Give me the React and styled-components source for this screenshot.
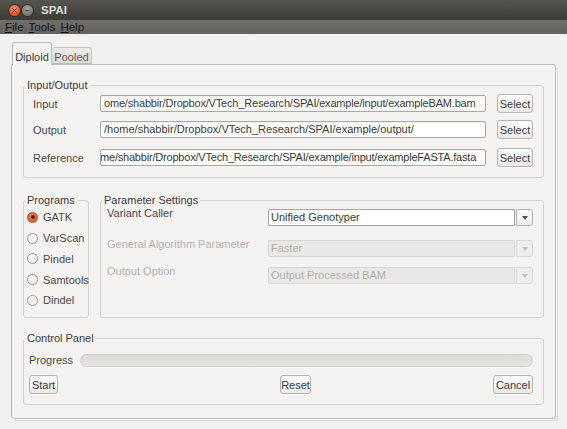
import React from 'react';
import styled, { createGlobalStyle } from 'styled-components';

const Global = createGlobalStyle`
  html, body { margin: 0; padding: 0; background: #f2f1f0; }
  body { font-family: "Liberation Sans", Arial, sans-serif; font-size: 11px; color: #3c3c3c; }
  * { box-sizing: border-box; }
`;

const Window = styled.div`
  width: 567px;
  height: 429px;
  display: flex;
  flex-direction: column;
  overflow: hidden;
  background: #f2f1f0;
`;

const TitleBar = styled.div`
  height: 20px;
  flex: none;
  display: flex;
  align-items: center;
  padding-left: 9px;
  background: linear-gradient(#55544f, #3c3b37);
`;

const WinButton = styled.span`
  width: 11px;
  height: 11px;
  border-radius: 50%;
  margin-right: 2px;
  display: flex;
  align-items: center;
  justify-content: center;
  background: ${p => (p.$close
    ? 'radial-gradient(circle at 50% 35%, #f89a68, #df4c17 70%)'
    : 'radial-gradient(circle at 50% 35%, #a9a8a3, #74736e 70%)')};
  box-shadow: 0 0 0 1px rgba(0, 0, 0, 0.35);
`;

const Title = styled.span`
  margin-left: 6px;
  font-weight: bold;
  font-size: 11.5px;
  color: #dfdbd2;
`;

const MenuBar = styled.div`
  height: 14px;
  flex: none;
  display: flex;
  align-items: center;
  gap: 5px;
  padding-left: 5px;
  background: linear-gradient(#6f6e69, #64635f);
`;

const MenuItem = styled.span`
  font-size: 11.5px;
  color: #161616;
  line-height: 14px;
  & u { text-decoration: underline; text-underline-offset: 1px; }
`;

const Body = styled.div`
  flex: 1;
  padding: 8px 0 0 11px;
`;

const TabStrip = styled.div`
  height: 23px;
  margin-bottom: -1px;
  padding-left: 1px;
  display: flex;
  align-items: flex-start;
  position: relative;
  z-index: 1;
`;

const Tab = styled.div`
  width: 40px;
  height: ${p => (p.$active ? '23px' : '17px')};
  margin-top: ${p => (p.$active ? '0' : '5px')};
  border: 1px solid ${p => (p.$active ? '#bdbbb6' : '#c6c4bf')};
  border-bottom: ${p => (p.$active ? 'none' : '1px solid #bdbbb6')};
  border-left: ${p => (p.$active ? '1px solid #bdbbb6' : 'none')};
  border-radius: 3px 3px 0 0;
  background: ${p => (p.$active ? '#f4f3f2' : 'linear-gradient(#ebeae8, #dedcd9)')};
  color: ${p => (p.$active ? '#3c3c3c' : '#5c5c5c')};
  padding-top: ${p => (p.$active ? '7px' : '2px')};
  line-height: 14px;
  text-align: center;
  font-size: 11px;
`;

const Pane = styled.div`
  width: 545px;
  border: 1px solid #bdbbb6;
  border-radius: 0 3px 3px 3px;
  background: #f4f3f2;
  padding: 13px 11px 13px 11px;
  display: flex;
  flex-direction: column;
  box-shadow: 1px 1px 0 #ffffff, 2px 2px 0 #d8d6d1;
`;

const Group = styled.fieldset`
  margin: 0;
  margin-top: ${p => p.$mt || 0}px;
  padding: 0;
  min-width: 0;
  border: 1px solid #d6d4cf;
  border-radius: 3px;
  width: ${p => (p.$w ? `${p.$w}px` : 'auto')};
  flex: ${p => (p.$w ? 'none' : '1')};
`;

const Legend = styled.legend`
  margin-left: 1px;
  padding: 0 2px;
  line-height: 14px;
  font-size: 11px;
  color: #3c3c3c;
`;

const GroupBody = styled.div`
  padding: ${p => p.$pad};
`;

const IORow = styled.div`
  display: grid;
  grid-template-columns: 56px 1fr 36px;
  column-gap: 11px;
  align-items: center;
  height: 19px;
  margin-top: ${p => p.$mt || 0}px;
`;

const Label = styled.span`
  color: ${p => (p.$disabled ? '#b4b2ad' : '#4a4a4a')};
  font-size: 11px;
  line-height: 14px;
  white-space: nowrap;
`;

const TextField = styled.div`
  height: 17px;
  border: 1px solid #aaa8a3;
  border-radius: 2px;
  background: #ffffff;
  padding: 0 3px;
  overflow: hidden;
  white-space: nowrap;
  line-height: 15px;
  font-size: 11px;
  color: #3a3a3a;
  box-shadow: inset 0 1px 1px rgba(0, 0, 0, 0.06);
`;

const FieldText = styled.span`
  display: inline-block;
  margin-left: ${p => p.$shift || 0}px;
  letter-spacing: ${p => p.$track || 0}px;
`;

const Button = styled.div`
  width: ${p => p.$w}px;
  height: 19px;
  border: 1px solid #b5b3ae;
  border-radius: 3px;
  background: linear-gradient(#fefefe, #ebeae8);
  display: flex;
  align-items: center;
  justify-content: center;
  font-size: 11px;
  color: #3c3c3c;
  box-shadow: 0 1px 0 rgba(255, 255, 255, 0.8);
`;

const Middle = styled.div`
  display: flex;
  gap: 11px;
  height: 125px;
  margin-top: 15px;
`;

const RadioRow = styled.div`
  display: flex;
  align-items: center;
  gap: 5px;
  height: 20.75px;
`;

const Radio = styled.span`
  width: 11px;
  height: 11px;
  flex: none;
  border-radius: 50%;
  display: flex;
  align-items: center;
  justify-content: center;
  border: 1px solid ${p => (p.$on ? '#c24e1d' : '#9b9994')};
  background: ${p => (p.$on
    ? 'radial-gradient(circle at 50% 40%, #f7976a, #e0561f 75%)'
    : 'linear-gradient(#ffffff, #ecebe9)')};
  &::after {
    content: '';
    display: ${p => (p.$on ? 'block' : 'none')};
    width: 4px;
    height: 4px;
    border-radius: 50%;
    background: #5a1f08;
  }
`;

const ParamRow = styled.div`
  display: grid;
  grid-template-columns: 161px 1fr;
  height: 17px;
  margin-top: ${p => p.$mt || 0}px;
  & > ${Label} { margin-top: -3px; }
`;

const Combo = styled.div`
  display: flex;
  height: 17px;
`;

const ComboText = styled.div`
  flex: 1;
  border: 1px solid ${p => (p.$disabled ? '#d9d7d3' : '#a6a4a0')};
  border-radius: 2px 0 0 2px;
  background: ${p => (p.$disabled ? '#e9e8e6' : '#ffffff')};
  color: ${p => (p.$disabled ? '#b3b1ac' : '#3a3a3a')};
  padding-left: 2px;
  line-height: 15px;
  font-size: 11px;
  white-space: nowrap;
  overflow: hidden;
`;

const ComboArrow = styled.div`
  width: 17px;
  margin-left: 1px;
  border: 1px solid ${p => (p.$disabled ? '#dbd9d5' : '#b3b1ad')};
  border-radius: 0 3px 3px 0;
  background: ${p => (p.$disabled ? '#efeeec' : 'linear-gradient(#fbfbfa, #ecebe9)')};
  display: flex;
  align-items: center;
  justify-content: center;
  &::after {
    content: '';
    border-left: 3px solid transparent;
    border-right: 3px solid transparent;
    border-top: 4px solid ${p => (p.$disabled ? '#c3c1bc' : '#505050')};
  }
`;

const ProgressRow = styled.div`
  display: grid;
  grid-template-columns: 51px 1fr;
  align-items: center;
  height: 13px;
`;

const ProgressBar = styled.div`
  height: 13px;
  border: 1px solid #d2d0cc;
  border-radius: 7px;
  background: linear-gradient(#dddcd9, #e6e5e2);
`;

const ButtonRow = styled.div`
  display: grid;
  grid-template-columns: 251px 31px 1fr;
  margin-top: 9px;
  & > :last-child { justify-self: end; }
`;

const CloseIcon = () => (
  <svg width="5" height="5" viewBox="0 0 5 5">
    <path d="M0.5 0.5L4.5 4.5M4.5 0.5L0.5 4.5" stroke="#5a1e08" strokeWidth="1" />
  </svg>
);

const MinIcon = () => (
  <svg width="5" height="5" viewBox="0 0 5 5">
    <path d="M0.5 2.5H4.5" stroke="#3c3b37" strokeWidth="1" />
  </svg>
);

const programs = ['GATK', 'VarScan', 'Pindel', 'Samtools', 'Dindel'];

export default function App() {
  return (
    <>
      <Global />
      <Window>
        <TitleBar>
          <WinButton $close><CloseIcon /></WinButton>
          <WinButton><MinIcon /></WinButton>
          <Title>SPAI</Title>
        </TitleBar>
        <MenuBar>
          <MenuItem><u>F</u>ile</MenuItem>
          <MenuItem><u>T</u>ools</MenuItem>
          <MenuItem><u>H</u>elp</MenuItem>
        </MenuBar>
        <Body>
          <TabStrip>
            <Tab $active>Diploid</Tab>
            <Tab>Pooled</Tab>
          </TabStrip>
          <Pane>
            <Group>
              <Legend>Input/Output</Legend>
              <GroupBody $pad="2px 10px 10px 9px">
                <IORow>
                  <Label>Input</Label>
                  <TextField><FieldText $track={-0.18}>ome/shabbir/Dropbox/VTech_Research/SPAI/example/input/exampleBAM.bam</FieldText></TextField>
                  <Button $w={36}>Select</Button>
                </IORow>
                <IORow $mt={7}>
                  <Label>Output</Label>
                  <TextField><FieldText>/home/shabbir/Dropbox/VTech_Research/SPAI/example/output/</FieldText></TextField>
                  <Button $w={36}>Select</Button>
                </IORow>
                <IORow $mt={9}>
                  <Label>Reference</Label>
                  <TextField><FieldText $shift={-4} $track={-0.2}>me/shabbir/Dropbox/VTech_Research/SPAI/example/input/exampleFASTA.fasta</FieldText></TextField>
                  <Button $w={36}>Select</Button>
                </IORow>
              </GroupBody>
            </Group>
            <Middle>
              <Group $w={66}>
                <Legend>Programs</Legend>
                <GroupBody $pad="0 0 0 3px">
                  {programs.map((p, i) => (
                    <RadioRow key={p}>
                      <Radio $on={i === 0} />
                      <Label>{p}</Label>
                    </RadioRow>
                  ))}
                </GroupBody>
              </Group>
              <Group>
                <Legend>Parameter Settings</Legend>
                <GroupBody $pad="0 10px 0 6px">
                  <ParamRow $mt={2}>
                    <Label>Variant Caller</Label>
                    <Combo>
                      <ComboText>Unified Genotyper</ComboText>
                      <ComboArrow />
                    </Combo>
                  </ParamRow>
                  <ParamRow $mt={14}>
                    <Label $disabled>General Algorithm Parameter</Label>
                    <Combo>
                      <ComboText $disabled>Faster</ComboText>
                      <ComboArrow $disabled />
                    </Combo>
                  </ParamRow>
                  <ParamRow $mt={10}>
                    <Label $disabled>Output Option</Label>
                    <Combo>
                      <ComboText $disabled>Output Processed BAM</ComboText>
                      <ComboArrow $disabled />
                    </Combo>
                  </ParamRow>
                </GroupBody>
              </Group>
            </Middle>
            <Group $mt={13}>
              <Legend>Control Panel</Legend>
              <GroupBody $pad="8px 10px 10px 5px">
                <ProgressRow>
                  <Label>Progress</Label>
                  <ProgressBar />
                </ProgressRow>
                <ButtonRow>
                  <Button $w={29}>Start</Button>
                  <Button $w={31}>Reset</Button>
                  <Button $w={40}>Cancel</Button>
                </ButtonRow>
              </GroupBody>
            </Group>
          </Pane>
        </Body>
      </Window>
    </>
  );
}
